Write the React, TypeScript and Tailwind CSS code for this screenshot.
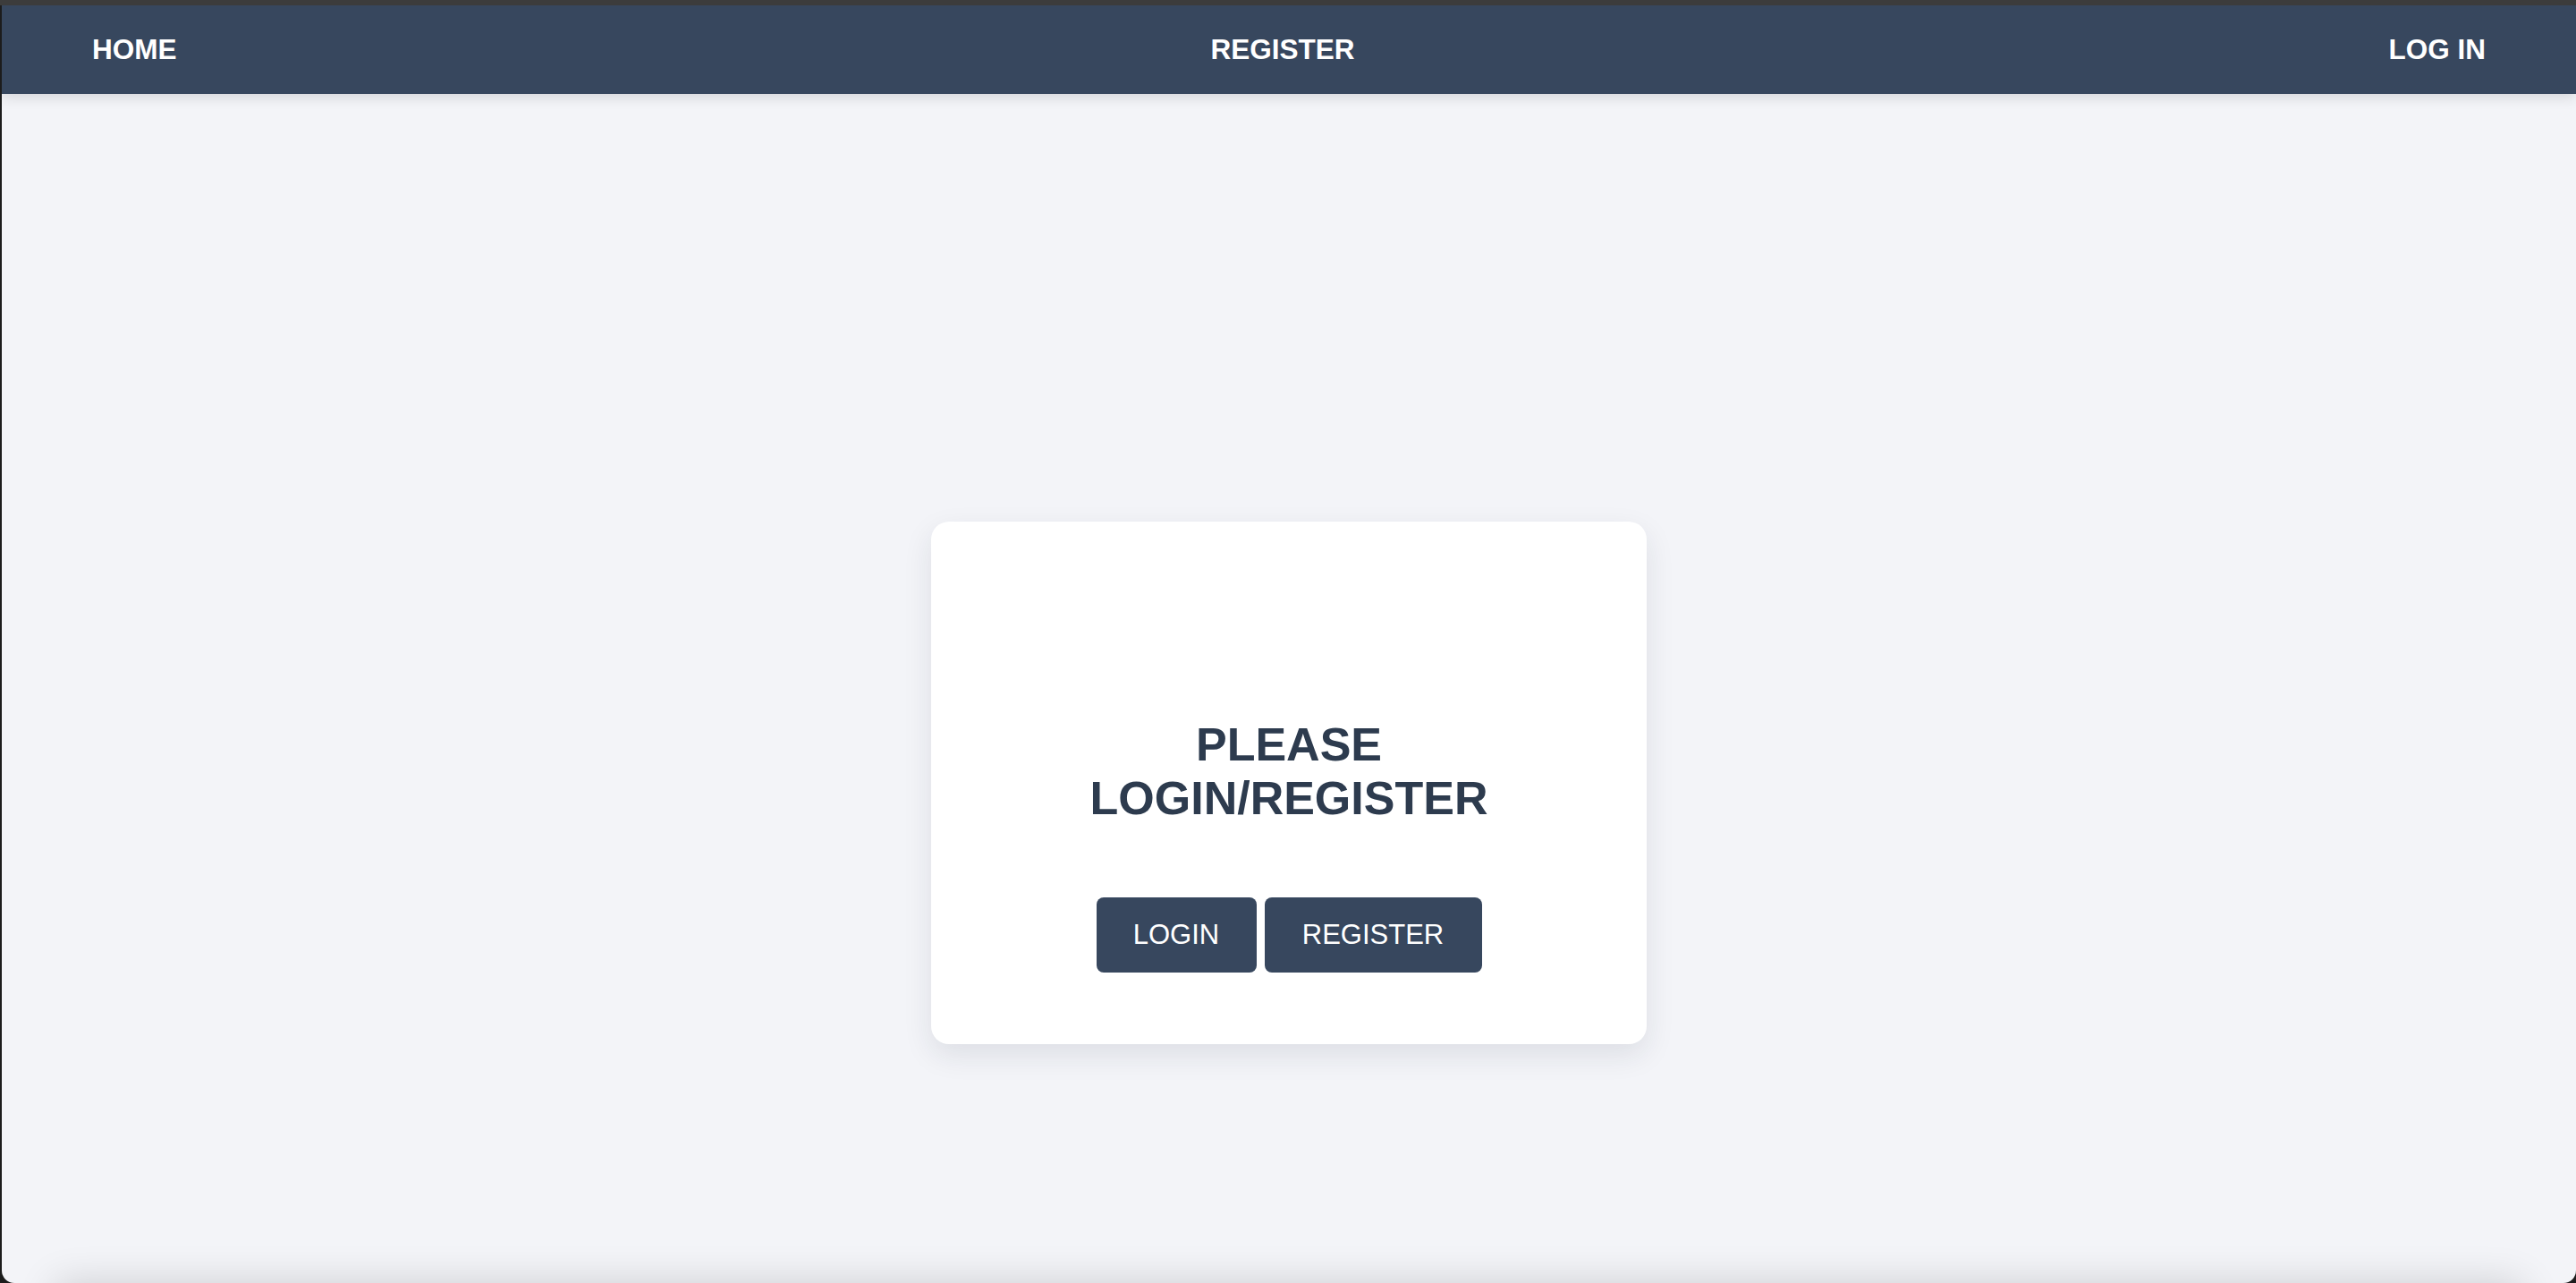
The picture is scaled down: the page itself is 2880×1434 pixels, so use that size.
export default function App() {
  const font = { fontFamily: '"Liberation Sans", Arial, Helvetica, sans-serif' };

  return (
    <div className="h-[1434px] bg-[#1c1c1c]" style={font}>
      <div className="h-[6px] bg-[#3c3c3c]" />
      <div className="ml-[2px] flex h-[1428px] flex-col overflow-hidden rounded-b-[14px] bg-[#f3f4f8]">
        <nav className="relative z-10 flex h-[99px] shrink-0 items-center justify-between bg-[#37475e] pl-[101px] pr-[101px] shadow-[0_4px_14px_rgba(0,0,0,0.12)]">
          <a className="text-[31.5px] font-bold text-white">HOME</a>
          <a className="text-[31.5px] font-bold text-white">REGISTER</a>
          <a className="text-[31.5px] font-bold text-white">LOG IN</a>
        </nav>

        <main className="flex h-[1329px] shrink-0 justify-center pt-[478px]">
          <div className="flex h-[584px] w-[800px] flex-col items-center rounded-[20px] bg-white pt-[219px] pb-[80px] shadow-[0_12px_32px_rgba(30,40,60,0.10)]">
            <h1 className="mb-[81px] text-center text-[52px] leading-[60px] font-bold text-[#2d3b4e]">
              PLEASE
              <br />
              LOGIN/REGISTER
            </h1>
            <div className="flex gap-[9px]">
              <button className="flex h-[84px] w-[179px] items-center justify-center rounded-[8px] bg-[#37475e] text-[31px] text-white">
                LOGIN
              </button>
              <button className="flex h-[84px] w-[243px] items-center justify-center rounded-[8px] bg-[#37475e] text-[31px] text-white">
                REGISTER
              </button>
            </div>
          </div>
        </main>

        <footer className="relative z-10 mx-[60px] h-[80px] shrink-0 bg-[#37475e] shadow-[0_0_44px_rgba(0,0,0,0.16)]" />
      </div>
    </div>
  );
}
